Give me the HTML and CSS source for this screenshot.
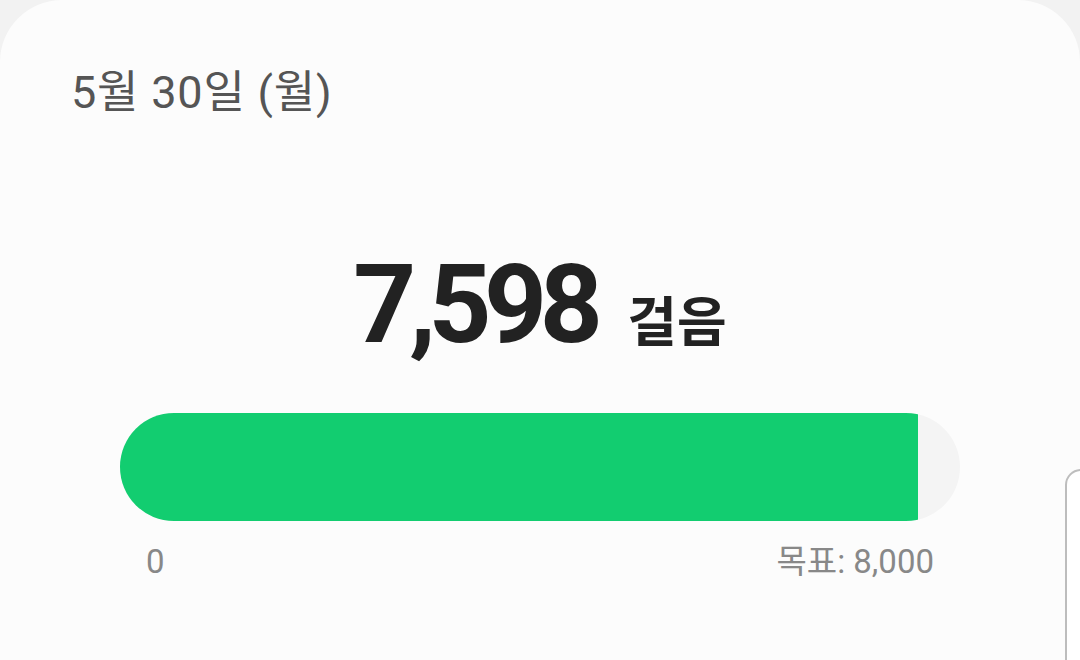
FILE: index.html
```html
<!DOCTYPE html>
<html lang="ko">
<head>
    <meta charset="UTF-8">
    <meta name="viewport" content="width=device-width, initial-scale=1.0">
    <title>걸음 수</title>
    <link rel="stylesheet" href="styles.css">
</head>
<body>
    <main class="card">
        <h1 class="date">5월 30일 (월)</h1>

        <div class="steps">
            <span class="count">7,598</span>
            <span class="unit">걸음</span>
        </div>

        <div class="progress">
            <div class="fill" style="width: 94.975%"></div>
        </div>
        <div class="scale">
            <span>0</span>
            <span>목표: 8,000</span>
        </div>
    </main>

    <div class="next-card"></div>
</body>
</html>
```

FILE: styles.css
```css
* {
    margin: 0;
    padding: 0;
    box-sizing: border-box;
}
body {
    width: 1080px;
    height: 660px;
    overflow: hidden;
    background: #f2f2f2;
    font-family: Roboto, "Noto Sans CJK KR", sans-serif;
    position: relative;
}
.card {
    height: 660px;
    background: #fcfcfc;
    border-radius: 62px 62px 0 0;
    padding: 66px 120px 0 120px;
}
.date {
    margin-left: -49px;
    font-size: 45px;
    font-weight: 400;
    line-height: 1.2;
    color: #555;
    letter-spacing: 0.8px;
}
.steps {
    display: flex;
    justify-content: center;
    align-items: baseline;
    gap: 32px;
    margin-top: 130px;
    color: #222;
}
.count {
    font-size: 110px;
    font-weight: 700;
    line-height: 1;
    letter-spacing: -7.5px;
}
.unit {
    font-size: 54px;
    font-weight: 700;
}
.progress {
    margin-top: 53px;
    height: 108px;
    border-radius: 54px;
    background: #f4f4f4;
    overflow: hidden;
}
.fill {
    height: 100%;
    background: #12cd70;
}
.scale {
    display: flex;
    justify-content: space-between;
    padding: 0 26px;
    margin-top: 21px;
    font-size: 33px;
    line-height: 1.2;
    color: #888;
}
.next-card {
    position: absolute;
    left: 1065px;
    top: 469px;
    width: 60px;
    height: 191px;
    border: 2px solid #bdbdbd;
    border-bottom: none;
    border-radius: 16px 16px 0 0;
    background: #fff;
}
```
